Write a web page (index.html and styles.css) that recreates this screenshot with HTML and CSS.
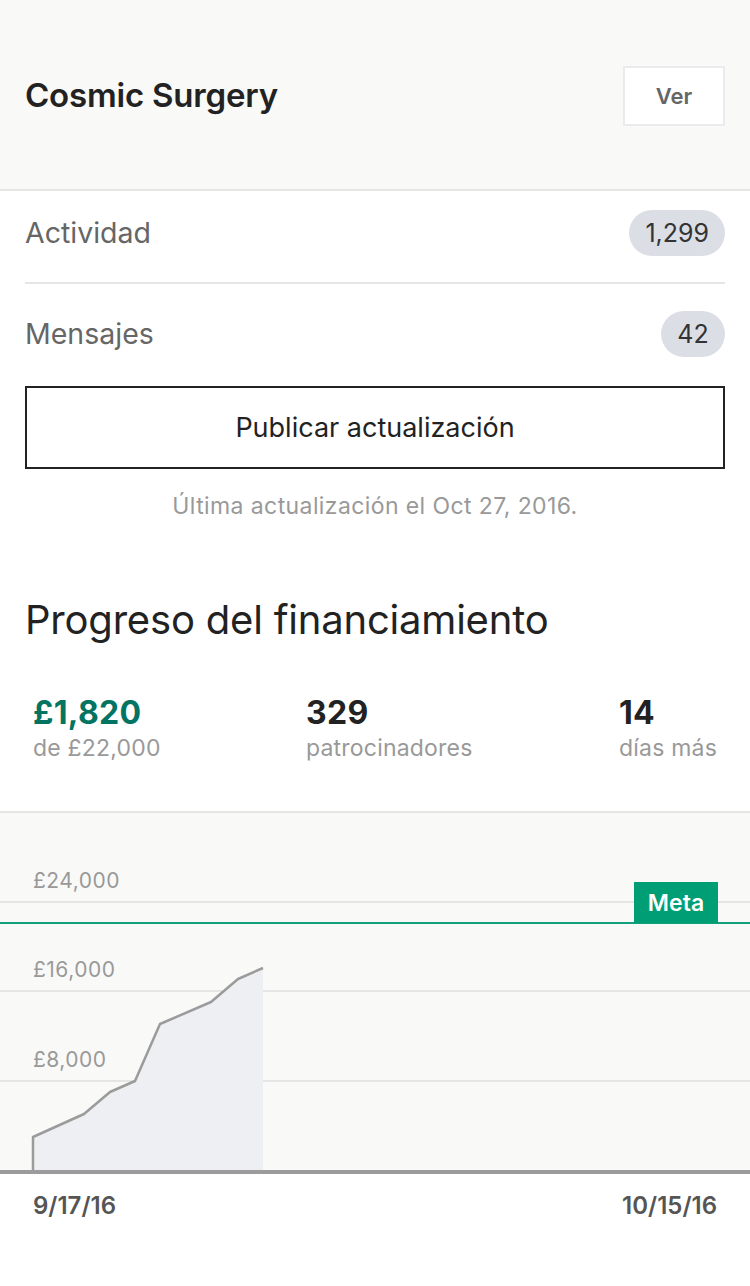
FILE: index.html
```html
<!DOCTYPE html>
<html lang="es">
<head>
<meta charset="utf-8">
<link rel="stylesheet" href="styles.css">
</head>
<body>
<header class="header">
  <h1 class="title">Cosmic Surgery</h1>
  <button class="ver">Ver</button>
</header>
<section class="rows">
  <div class="row row-first">
    <span class="row-label">Actividad</span>
    <span class="badge">1,299</span>
  </div>
  <div class="row row-second">
    <span class="row-label">Mensajes</span>
    <span class="badge">42</span>
  </div>
</section>
<div class="btn-wrap"><button class="publish">Publicar actualización</button></div>
<p class="updated">Última actualización el Oct 27, 2016.</p>
<h2 class="progress-title">Progreso del financiamiento</h2>
<div class="stats">
  <div class="stat"><div class="stat-num green">£1,820</div><div class="stat-label">de £22,000</div></div>
  <div class="stat"><div class="stat-num">329</div><div class="stat-label">patrocinadores</div></div>
  <div class="stat"><div class="stat-num">14</div><div class="stat-label">días más</div></div>
</div>
<section class="chart">
  <svg class="chart-svg" width="750" height="357" viewBox="0 0 750 357">
    <line x1="0" y1="89" x2="750" y2="89" stroke="#e5e5e5" stroke-width="2"/>
    <line x1="0" y1="178" x2="750" y2="178" stroke="#e5e5e5" stroke-width="2"/>
    <line x1="0" y1="268" x2="750" y2="268" stroke="#e5e5e5" stroke-width="2"/>
    <text class="axis" x="33" y="75">£24,000</text>
    <text class="axis" x="33" y="164">£16,000</text>
    <text class="axis" x="33" y="254">£8,000</text>
    <polygon points="33,358 33,324 84,301 110,279 135,268 160,211 211,189 238,166 263,155 263,358" fill="#eeeff2"/>
    <polyline points="33,358 33,324 84,301 110,279 135,268 160,211 211,189 238,166 263,155" fill="none" stroke="#9b9b9b" stroke-width="2.5" stroke-linejoin="round"/>
    <line x1="0" y1="110" x2="750" y2="110" stroke="#10a07a" stroke-width="2"/>
    <rect x="634" y="69" width="84" height="41" fill="#009e74"/>
    <text class="meta" x="676" y="98" text-anchor="middle">Meta</text>
  </svg>
</section>
<div class="dates">
  <span>9/17/16</span>
  <span>10/15/16</span>
</div>
</body>
</html>
```
FILE: styles.css
```css
* { box-sizing: border-box; }
body {
  margin: 0;
  width: 750px;
  background: #ffffff;
  font-family: Inter, "Liberation Sans", Arial, sans-serif;
  color: #222;
}
.header {
  height: 191px;
  background: #f9f9f8;
  border-bottom: 2px solid #e6e6e6;
  padding: 0 25px;
  display: flex;
  align-items: center;
  justify-content: space-between;
}
.title {
  margin: 0;
  font-size: 33px;
  font-weight: 600;
  color: #222;
  letter-spacing: -0.2px;
}
.ver {
  width: 102px;
  height: 60px;
  margin-top: 2px;
  background: #fff;
  border: 2px solid #ebebee;
  font-family: inherit;
  font-size: 22px;
  font-weight: 600;
  color: #666;
}
.rows { padding: 0 25px; }
.row {
  display: flex;
  align-items: center;
  justify-content: space-between;
}
.row-first {
  padding: 19px 0 26px;
  border-bottom: 2px solid #e6e6e6;
}
.row-second {
  padding: 27px 0 29px;
}
.row-label {
  font-size: 28.5px;
  line-height: 34px;
  color: #666;
}
.badge {
  height: 46px;
  min-width: 64px;
  padding: 0 16px;
  border-radius: 23px;
  background: #dcdee6;
  display: flex;
  align-items: center;
  justify-content: center;
  font-size: 25px;
  color: #333;
}
.btn-wrap { padding: 0 25px; }
.publish {
  width: 100%;
  height: 83px;
  background: #fff;
  border: 2px solid #222;
  font-family: inherit;
  font-size: 27px;
  color: #222;
}
.updated {
  margin: 24px 0 0;
  text-align: center;
  font-size: 23px;
  letter-spacing: 0.4px;
  color: #999;
  line-height: 26px;
}
.progress-title {
  margin: 77px 0 0 25px;
  font-size: 40px;
  font-weight: 400;
  line-height: 48px;
  color: #222;
  letter-spacing: -0.2px;
}
.stats {
  display: grid;
  grid-template-columns: 273px 313px 1fr;
  padding-left: 33px;
  margin-top: 50px;
}
.stat-num {
  font-size: 32px;
  font-weight: 700;
  line-height: 38px;
  letter-spacing: 0.3px;
  color: #222;
}
.stat-num.green { color: #037362; }
.stat-label {
  font-size: 23px;
  line-height: 32px;
  letter-spacing: 0.2px;
  color: #999;
}
.chart {
  margin-top: 47px;
  border-top: 2px solid #e6e6e6;
  background: #f9f9f8;
  height: 363px;
  border-bottom: 4px solid #9b9b9b;
}
.chart-svg { display: block; }
.axis {
  font-family: Inter, "Liberation Sans", Arial, sans-serif;
  font-size: 21px;
  letter-spacing: 0.5px;
  fill: #999;
}
.meta {
  font-family: Inter, "Liberation Sans", Arial, sans-serif;
  font-size: 23px;
  font-weight: 600;
  fill: #fff;
}
.dates {
  display: flex;
  justify-content: space-between;
  padding: 17px 33px 0;
  font-size: 24px;
  line-height: 30px;
  font-weight: 600;
  color: #555;
}
```
